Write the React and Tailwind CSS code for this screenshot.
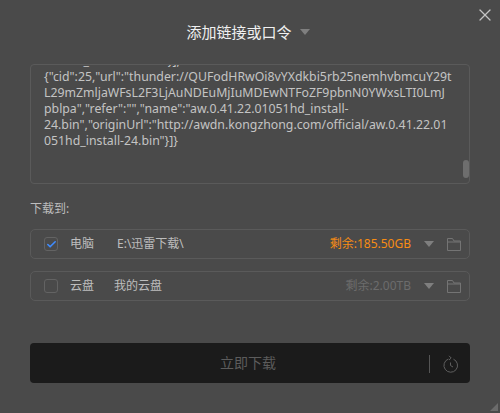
import { Check, X } from "lucide-react";

const font = { fontFamily: '"Noto Sans", "Noto Sans CJK SC", sans-serif' };

function Caret({ className }) {
  return (
    <svg className={className} width="10" height="6" viewBox="0 0 10 6">
      <path d="M0 0H10L5 6Z" fill="#7f7f7f" />
    </svg>
  );
}

function Folder() {
  return (
    <svg width="14" height="13" viewBox="0 0 14 13" fill="none" stroke="#747474">
      <path d="M.5 12.5V.5H5.5L7 3H13.5V12.5ZM.5 4H13.5" />
    </svg>
  );
}

function TargetRow({ checked, name, path, pathClass, free, freeClass }) {
  return (
    <div className="flex items-center h-[30px] pl-[13px] pr-[8px] border border-[#5a5a5a] rounded-[5px]">
      <div className="flex items-center justify-center w-[14px] h-[14px] border border-[#636363] rounded-[3px]">
        {checked && <Check size={11} strokeWidth={3.5} className="text-[#3f8cff]" />}
      </div>
      <span className="ml-[12px] w-[36px] text-xs text-[#bdbdbd]">{name}</span>
      <span className={`text-xs text-[#bdbdbd] ${pathClass}`}>{path}</span>
      <span className={`ml-auto text-xs ${freeClass}`}>{free}</span>
      <Caret className="ml-[13px]" />
      <span className="ml-[13px] flex"><Folder /></span>
    </div>
  );
}

export default function App() {
  return (
    <div className="relative w-[500px] h-[413px] bg-[#4a4a4a] overflow-hidden" style={font}>
      {/* HEADER */}
      <div className="flex items-center justify-center gap-[8px] h-[64px] pr-[4px]">
        <span className="text-[15px] text-[#f0f0f0]">添加链接或口令</span>
        <Caret />
      </div>
      <button className="absolute top-[5px] right-[5px] text-[#c4c4c4]">
        <X size={20} strokeWidth={1.5} />
      </button>

      <div className="px-[30px]">
        {/* LINK BOX */}
        <div className="relative h-[120px] border border-[#5a5a5a] rounded-[4px] overflow-hidden">
          <div className="-mt-[12px] pl-[13px] pr-[14px] text-[12.3px] leading-[16px] text-[#c4c4c4]">
            <div className="whitespace-nowrap">04 1hd_install-23.bin"}],</div>
            <div className="whitespace-nowrap">{'{"cid":25,"url":"thunder://QUFodHRwOi8vYXdkbi5rb25nemhvbmcuY29t'}</div>
            <div className="whitespace-nowrap">L29mZmljaWFsL2F3LjAuNDEuMjIuMDEwNTFoZF9pbnN0YWxsLTI0LmJ</div>
            <div className="whitespace-nowrap">{'pblpa","refer":"","name":"aw.0.41.22.01051hd_install-'}</div>
            <div className="whitespace-nowrap">{'24.bin","originUrl":"http://awdn.kongzhong.com/official/aw.0.41.22.01'}</div>
            <div className="whitespace-nowrap">{'051hd_install-24.bin"}]}'}</div>
          </div>
          <div className="absolute right-0 top-[95px] w-[6px] h-[18px] rounded-[3px] bg-[#6e6e6e]" />
        </div>

        {/* TARGET */}
        <div className="mt-[17px] text-xs leading-[16px] text-[#bdbdbd]">下载到:</div>
        <div className="mt-[12px] flex flex-col gap-[12px]">
          <TargetRow checked name="电脑" path="E:\迅雷下载\" pathClass="ml-[11px]" free="剩余:185.50GB" freeClass="text-[#f78c14]" />
          <TargetRow name="云盘" path="我的云盘" pathClass="ml-[8px]" free="剩余:2.00TB" freeClass="text-[#6c6c6c]" />
        </div>

        {/* DOWNLOAD BUTTON */}
        <div className="mt-[42px] relative flex items-center justify-center h-[40px] pr-[4px] bg-[#1b1b1b] rounded-[4px]">
          <span className="text-sm text-[#5c5c5c]">立即下载</span>
          <div className="absolute right-[40px] top-[12px] w-px h-[18px] bg-[#555555]" />
          <svg className="absolute right-[12px] top-[12px]" width="15" height="18" viewBox="0 0 15 18" fill="none" stroke="#5f5f5f" strokeWidth="1">
            <path d="M5.5 4A6.8 6.8 0 1 0 10.5 4.2" />
            <path d="M6 .8 8.2 3 6 5" />
            <path d="M7.5 7.5V10.5L10 12" />
          </svg>
        </div>
      </div>

      {/* RESIZE GRIP */}
      <svg className="absolute right-[2px] bottom-[2px]" width="8" height="8" viewBox="0 0 8 8">
        <path d="M8 0V8H0Z" fill="#6b6b6b" />
      </svg>
    </div>
  );
}
